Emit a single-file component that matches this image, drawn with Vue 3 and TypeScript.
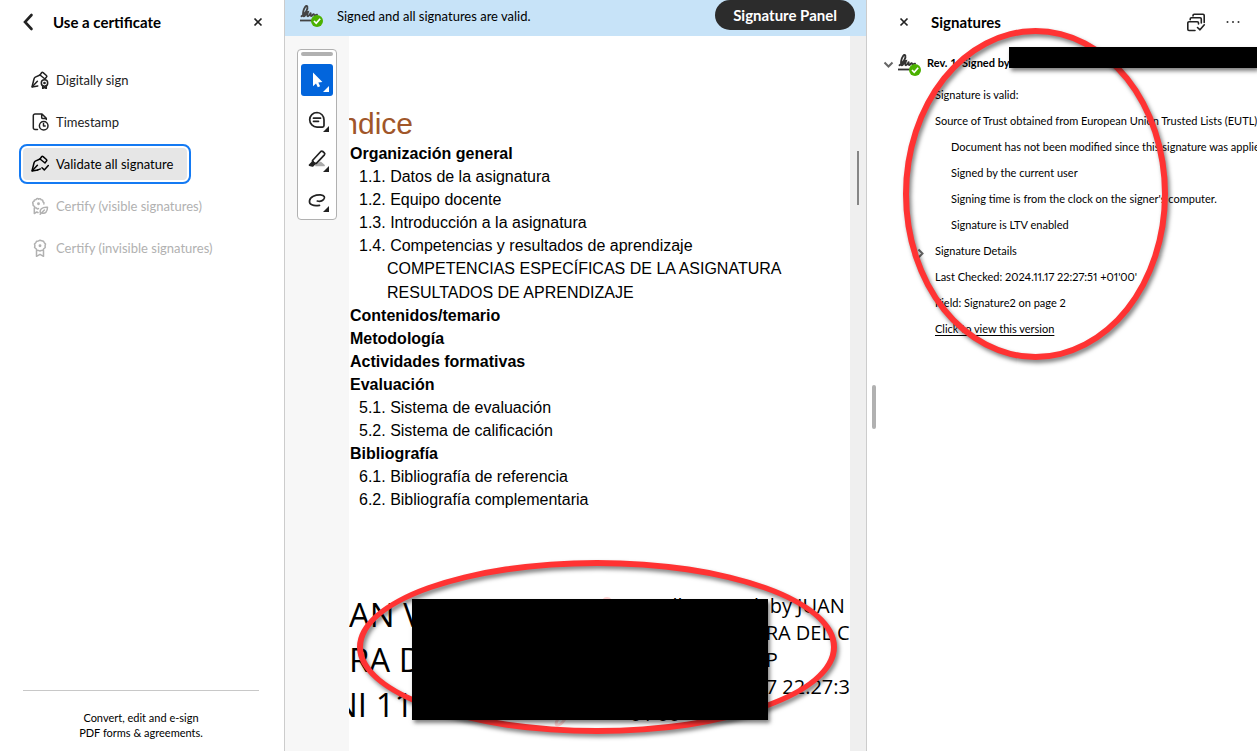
<script setup lang="ts">
interface Tool { id: string; label: string; disabled?: boolean; selected?: boolean }
interface Entry { text: string; level: number }

const tools: Tool[] = [
  { id: 'sign', label: 'Digitally sign' },
  { id: 'time', label: 'Timestamp' },
  { id: 'validate', label: 'Validate all signature', selected: true },
  { id: 'certify', label: 'Certify (visible signatures)', disabled: true },
  { id: 'ribbon', label: 'Certify (invisible signatures)', disabled: true },
]

const quickTools = [
  { id: 'select', label: 'Select' },
  { id: 'comment', label: 'Add comment' },
  { id: 'highlight', label: 'Highlight' },
  { id: 'draw', label: 'Draw' },
]

const contents: Entry[] = [
  { text: 'Organización general', level: 0 },
  { text: '1.1. Datos de la asignatura', level: 1 },
  { text: '1.2. Equipo docente', level: 1 },
  { text: '1.3. Introducción a la asignatura', level: 1 },
  { text: '1.4. Competencias y resultados de aprendizaje', level: 1 },
  { text: 'COMPETENCIAS ESPECÍFICAS DE LA ASIGNATURA', level: 2 },
  { text: 'RESULTADOS DE APRENDIZAJE', level: 2 },
  { text: 'Contenidos/temario', level: 0 },
  { text: 'Metodología', level: 0 },
  { text: 'Actividades formativas', level: 0 },
  { text: 'Evaluación', level: 0 },
  { text: '5.1. Sistema de evaluación', level: 1 },
  { text: '5.2. Sistema de calificación', level: 1 },
  { text: 'Bibliografía', level: 0 },
  { text: '6.1. Bibliografía de referencia', level: 1 },
  { text: '6.2. Bibliografía complementaria', level: 1 },
]

const checks = [
  'Document has not been modified since this signature was applied',
  'Signed by the current user',
  "Signing time is from the clock on the signer's computer.",
  'Signature is LTV enabled',
]

const scribble =
  'M2.500 12.300C6 10 9.300 5 8.300 2.400 7.200.6 4.900 4 4.200 8c-.6 3.800.2 5 1.600 3.700C7 10.500 7.800 8.300 9 8c-.9 2.800-.9 4.300 0 4.300 1.100 0 2-2.300 2.800-3.700-.5 1.900-.4 3.400.5 3.400.9 0 1.200-1.500 2.200-1.800.8-.2.500 1.300 1.500 1.100.8-.2 1-.8 2-.6'
</script>

<template>
  <div class="app">
    <aside class="tools">
      <header class="tools-head">
        <button class="icon-btn" aria-label="Back">
          <svg width="12" height="18" viewBox="0 0 12 18"><path d="M9.500 2 3 9l6.500 7" fill="none" stroke="#222" stroke-width="2.600" stroke-linecap="round" /></svg>
        </button>
        <h1>Use a certificate</h1>
        <button class="icon-btn" aria-label="Close tools">
          <svg width="10" height="10" viewBox="0 0 10 10"><path d="m1.500 1.500 7 7m0-7-7 7" stroke="#222" stroke-width="1.700" /></svg>
        </button>
      </header>

      <nav class="tool-list">
        <button v-for="t in tools" :key="t.id" class="tool" :class="{ selected: t.selected }" :disabled="t.disabled">
          <svg class="tool-icon" width="18" height="18" viewBox="0 0 18 18" fill="none" stroke="currentColor" stroke-width="1.500" stroke-linejoin="round" stroke-linecap="round">
            <template v-if="t.id === 'sign' || t.id === 'validate'">
              <path d="M9 4 4.300 6.100Q3.300 6.700 3 8L1 16l5.800-1.100" />
              <path d="m1.400 15.600 5-5.400" />
              <path d="m9 4 1.600-2.200q.6-.8 1.500-.2l3.300 2.900q.8.700.1 1.500l-1.200 1.400M9 4l5 4" />
            </template>
            <g v-if="t.id === 'sign'">
              <circle cx="13.500" cy="12" r="3.200" /><circle cx="13.500" cy="12" r=".6" />
              <path d="M11.700 14.800v2.700l1.800-1 1.800 1v-2.700" />
            </g>
            <path v-if="t.id === 'validate'" d="m11 12.700 2.300 2.200 4-4.300M9.500 13.900l-2.700 1" />
            <g v-if="t.id === 'time'">
              <path d="M6.500 16.500H4A1.700 1.700 0 0 1 2.300 14.800V2.700A1.700 1.700 0 0 1 4 1h7l4.300 4.300v1.200M10.700 1.200v3.200q0 1.200 1.200 1.200h3.200" />
              <circle cx="12.700" cy="12.700" r="4.300" /><path d="M12.500 10.500v2.500h1.700" />
            </g>
            <g v-if="t.id === 'certify'">
              <path d="M7.500 11.500c-1 .9-1.500.2-2-.5-1.400.2-2-.3-1.900-1.600C2.200 8.800 1.600 8 2.200 6.900c-.9-1-.6-2.100.8-2.500 0-1.300.6-1.900 2-1.700.7-1.300 1.700-1.500 2.600-.6 1.100-.8 2-.5 2.600.7 1.400 0 1.900.7 1.700 2 1.100.5 1.400 1.200 1 2.200" />
              <path d="M3.300 11v5.500l2.500-1.600 1.200.8M9.700 16.700c-1.800-3.800 1.300-7 6.800-6.500-.1 4.500-2.200 6.900-5.500 5.800M9.200 17.300l4.200-4.300" />
              <circle cx="7.500" cy="6.800" r=".7" />
            </g>
            <g v-if="t.id === 'ribbon'">
              <path d="M9 1.200 10.700 1.700 12.400 2.200 13.300 3.700 14.500 5 14.100 6.700 14.200 8.500 12.900 9.700 11.900 11.200 10.200 11.400 9 12.100 7.500 11.400 5.900 11.200 5 9.700 3.600 8.500 3.900 6.800 3.500 5 4.800 3.700 5.700 2.200 7.400 1.900Z" />
              <path d="M5.500 11.500v5.800l3.500-2 3.500 2v-5.800" /><circle cx="9" cy="6.700" r=".7" />
            </g>
          </svg>
          <span>{{ t.label }}</span>
        </button>
      </nav>

      <footer class="tools-foot">Convert, edit and e-sign<br>PDF forms &amp; agreements.</footer>
    </aside>

    <main class="viewer">
      <div class="banner">
        <svg class="signed" width="25" height="25" viewBox="0 0 25 25">
          <path d="M1 16.500h13" stroke="#444" stroke-width="1.800" />
          <path :d="scribble" fill="none" stroke="#444" stroke-width="1.900" stroke-linecap="round" />
          <circle cx="18" cy="17" r="6" fill="#4bb100" /><path d="m15 17 2.200 2.300 4-4.600" fill="none" stroke="#fff" stroke-width="1.700" />
        </svg>
        <p>Signed and all signatures are valid.</p>
        <button class="panel-btn">Signature Panel</button>
      </div>

      <div class="workspace">
        <div class="gutter">
          <div class="toolbar" role="toolbar" aria-label="Quick tools">
            <div class="grip"></div>
            <button v-for="q in quickTools" :key="q.id" class="quick" :class="{ active: q.id === 'select' }" :aria-label="q.label">
              <svg width="32" height="32" viewBox="0 0 32 32" fill="none" stroke="#222" stroke-width="1.700" stroke-linecap="round" stroke-linejoin="round">
                <path v-if="q.id === 'select'" d="M12 8.500v13.700l3-2.700 1.800 3.700 2.300-1-1.800-3.800 4.100-.4Z" fill="#fff" stroke="none" />
                <g v-if="q.id === 'comment'"><path d="M16 8.500a7.300 7.300 0 1 0 0 14.600h5.500q1.500 0 1.500-1.500v-5.800a7.200 7.200 0 0 0-7-7.300Z" /><path d="M12.500 14.200h7M12.500 17.300h5" /></g>
                <g v-if="q.id === 'highlight'"><path d="M15 21.500h8l-3.500-3Z" fill="#aaa" stroke="#aaa" /><path d="m11.500 16.500 8.300-9q1-.9 2 0l1.500 1.300q1 1 .1 2l-8 8.500-2.700-.1Z" /><path d="m11.500 17.500 2.700 2.300M11.500 18l-3 3.200 3 .8 2-1.800" fill="#222" /></g>
                <path v-if="q.id === 'draw'" d="M18.500 21.300C12 22.400 8 20.500 8.500 16.800 9 12.800 14.500 10.700 19.500 10.900c4.200.3 4.900 3 3 4.800-1.500 1.500-3.900 2-6.200 1.300" />
                <path d="M28 22v6h-6Z" :fill="q.id === 'select' ? '#fff' : '#222'" stroke="none" />
              </svg>
            </button>
          </div>
        </div>

        <article class="page">
          <h2>Índice</h2>
          <ul class="contents">
            <li v-for="c in contents" :key="c.text" :class="'level-' + c.level">{{ c.text }}</li>
          </ul>
          <section class="stamp">
            <svg class="mark" width="62" height="140" viewBox="0 0 62 140" fill="none" stroke="#ffd3d3" stroke-width="3"><path d="M50 12c0-10 10-10 10 0 0 25-20 72-47 113-6 9-12 7-7 0 6-7 13-9 20-11" /></svg>
            <p class="signer"><span>AN V</span><span>RA D</span><span class="cut">NI 11</span></p>
            <p class="details">
              <span>Digitally signed</span><span class="name">by JUAN</span>
              <span class="tail">RA DEL C</span>
              <span class="tail">P</span>
              <span class="tail">7 22:27:3</span>
              <span class="zone">+01'00'</span>
            </p>
          </section>
        </article>

        <div class="scroll"><div class="thumb"></div></div>
      </div>
      <div class="ring ring-stamp"></div>
      <div class="redact redact-stamp"></div>
    </main>

    <aside class="signatures">
      <header class="sig-head">
        <button class="icon-btn" aria-label="Close signatures">
          <svg width="10" height="10" viewBox="0 0 10 10"><path d="m1.500 1.500 7 7m0-7-7 7" stroke="#222" stroke-width="1.700" /></svg>
        </button>
        <h2>Signatures</h2>
        <button class="icon-btn" aria-label="Validate all">
          <svg width="20" height="20" viewBox="0 0 20 20" fill="none" stroke="#222" stroke-width="1.600" stroke-linejoin="round" stroke-linecap="round">
            <path d="M9 18.500H3A1.200 1.200 0 0 1 1.800 17.300V11A1.200 1.200 0 0 1 3 9.800h8.300q1.200 0 1.200 1.200v1M4.200 7.800V7q0-1.200 1.200-1.200h8.700q1.200 0 1.200 1.200v4M7 3.900V3.500q0-1.200 1.200-1.200h8.800q1.200 0 1.200 1.200v7M11.500 15.500l2.500 2.300 4.300-5" />
          </svg>
        </button>
        <button class="icon-btn" aria-label="More options">
          <svg width="16" height="4" viewBox="0 0 16 4" fill="#333"><circle cx="2.500" cy="2" r="1" /><circle cx="8" cy="2" r="1" /><circle cx="13.500" cy="2" r="1" /></svg>
        </button>
      </header>

      <div class="revision">
        <button class="icon-btn" aria-label="Collapse revision">
          <svg width="11" height="12" viewBox="0 0 11 12"><path d="m1.500 5.500 4 4 4-4" fill="none" stroke="#666" stroke-width="2" /></svg>
        </button>
        <svg class="signed" width="25" height="25" viewBox="0 0 25 25">
          <path d="M1 16.500h13" stroke="#333" stroke-width="1.800" />
          <path :d="scribble" fill="none" stroke="#333" stroke-width="1.900" stroke-linecap="round" />
          <circle cx="18" cy="17" r="6" fill="#4bb100" /><path d="m15 17 2.200 2.300 4-4.600" fill="none" stroke="#fff" stroke-width="1.700" />
        </svg>
        <strong>Rev. 1: Signed by</strong>
      </div>

      <div class="facts">
        <p>Signature is valid:</p>
        <p>Source of Trust obtained from European Union Trusted Lists (EUTL).</p>
        <p v-for="c in checks" :key="c" class="check">{{ c }}</p>
        <p class="expandable">
          <button class="icon-btn" aria-label="Expand signature details">
            <svg width="8" height="15" viewBox="0 0 8 15"><path d="m1.500 5.500 4 4-4 4" fill="none" stroke="#666" stroke-width="2" /></svg>
          </button>Signature Details
        </p>
        <p>Last Checked: 2024.11.17 22:27:51 +01'00'</p>
        <p>Field: Signature2 on page 2</p>
        <p><a href="#">Click to view this version</a></p>
      </div>
      <div class="resize"></div>
      <div class="ring ring-panel"></div>
      <div class="redact redact-name"></div>
    </aside>
  </div>
</template>

<style>
body { margin: 0; }
</style>

<style scoped>
.app {
  display: grid;
  grid-template-columns: 285px minmax(0, 1fr) 391px;
  height: 100vh;
  overflow: hidden;
  background: #fff;
  color: #000;
  font: 13px/20px Lato, "Open Sans", sans-serif;
}
h1, h2, p, ul { margin: 0; padding: 0; }
button { border: 0; padding: 0; background: none; font: inherit; color: inherit; }
svg { display: block; flex: none; }
.icon-btn { display: flex; align-items: center; justify-content: center; flex: none; }

.tools { display: flex; flex-direction: column; box-sizing: border-box; border-right: 1px solid #ccc; }
.tools-head { display: flex; align-items: center; height: 44px; padding: 0 21px 0 22px; }
.tools-head h1 { flex: 1; margin-left: 19px; font-size: 15px; font-weight: 700; }
.tool-list { display: flex; flex-direction: column; align-items: flex-start; gap: 10px; padding: 20px 23px; }
.tool { display: flex; align-items: center; gap: 7px; height: 32px; padding: 0 14px 0 8px; border-radius: 4px; color: #222; white-space: nowrap; }
.tool:disabled { color: #b1b1b1; }
.tool.selected { background: #e6e6e6; color: #000; outline: 2px solid #147af3; outline-offset: 2px; }
.tools-foot { margin: auto 25px 11px 23px; padding-top: 19px; border-top: 1px solid #c8c8c8; font-size: 11px; line-height: 15px; text-align: center; }

.viewer { position: relative; display: flex; flex-direction: column; overflow: hidden; }
.banner { display: flex; align-items: flex-start; height: 36px; background: #c7e3f8; flex: none; }
.banner .signed { margin: 4px 0 0 14px; }
.banner p { flex: 1; margin: 6px 0 0 13px; }
.panel-btn { height: 30px; margin: 0 11px 0 0; padding: 0 18px; border-radius: 15px; background: #2c2c2c; color: #fff; font-size: 15px; font-weight: 700; }
.workspace { flex: 1; display: flex; min-height: 0; }
.gutter { width: 64px; flex: none; background: #f7f7f7; }
.toolbar { display: flex; flex-direction: column; gap: 8px; margin: 13px 12px; padding: 2px 3px 3px; border: 1px solid #b1b1b1; border-radius: 4px; background: #fff; }
.grip { height: 4px; border-radius: 2px; background: #b1b1b1; }
.quick { height: 32px; border-radius: 3px; }
.quick.active { background: #0265dc; }
.page { flex: 1; min-width: 0; overflow: hidden; white-space: nowrap; font-family: "Liberation Sans", Arial, sans-serif; font-size: 16px; line-height: 23px; }
.page h2 { padding-top: 69px; font-size: 30px; line-height: 37px; font-weight: 400; color: #a0562a; text-indent: -16px; }
.contents { list-style: none; }
.level-0 { padding-left: 1px; font-weight: 700; }
.level-1 { padding-left: 10px; }
.level-2 { padding-left: 38px; }
.level-2 + .level-2 { padding-top: 1px; }
.stamp { position: relative; display: flex; margin-top: 81px; font-family: "Open Sans", sans-serif; }
.mark { position: absolute; left: 203px; top: 2px; }
.signer { width: 271px; font-size: 33px; line-height: 45px; }
.signer span { display: block; }
.signer .cut { text-indent: -16px; }
.details { display: grid; grid-template-columns: 147px 1fr; font-size: 20px; line-height: 27px; }
.details .name { padding-left: 4px; }
.details .tail { grid-column: 2; }
.details .zone { grid-column: 1; }
.scroll { width: 16px; flex: none; background: #efefef; }
.thumb { width: 2px; height: 54px; margin: 115px 0 0 7px; background: #868686; }

.signatures { position: relative; box-sizing: border-box; border-left: 1px solid #ccc; overflow: hidden; white-space: nowrap; font-size: 11px; }
.sig-head { display: flex; align-items: center; height: 44px; padding: 0 16px 0 32px; }
.sig-head h2 { flex: 1; margin-left: 22px; font-size: 15px; font-weight: 700; }
.sig-head .icon-btn:last-child { margin-left: 19px; }
.revision { display: flex; align-items: center; height: 38px; padding-left: 16px; }
.revision .signed { margin: 4px 5px 0 3px; }
.facts { padding-left: 68px; line-height: 26px; font-variant-numeric: proportional-nums; }
.check { padding-left: 16px; }
.expandable { display: flex; align-items: center; gap: 10px; margin-left: -18px; }
.facts a { color: #000; text-decoration: underline; text-underline-offset: 2px; }
.resize { position: absolute; left: 5px; top: 385px; width: 4px; height: 44px; border-radius: 2px; background: #b1b1b1; }

.ring { position: absolute; box-sizing: border-box; border: 6px solid #f33; border-radius: 50%; filter: drop-shadow(2px 3px 2px rgba(0, 0, 0, 0.5)); pointer-events: none; }
.ring-stamp { left: 72px; top: 560px; width: 480px; height: 174px; }
.ring-panel { left: 36px; top: 28px; width: 265px; height: 332px; }
.redact { position: absolute; background: #000; box-shadow: 2px 3px 4px rgba(0, 0, 0, 0.5); }
.redact-stamp { left: 127px; top: 599px; width: 356px; height: 121px; }
.redact-name { left: 142px; right: 0; top: 47px; height: 21px; }
</style>
